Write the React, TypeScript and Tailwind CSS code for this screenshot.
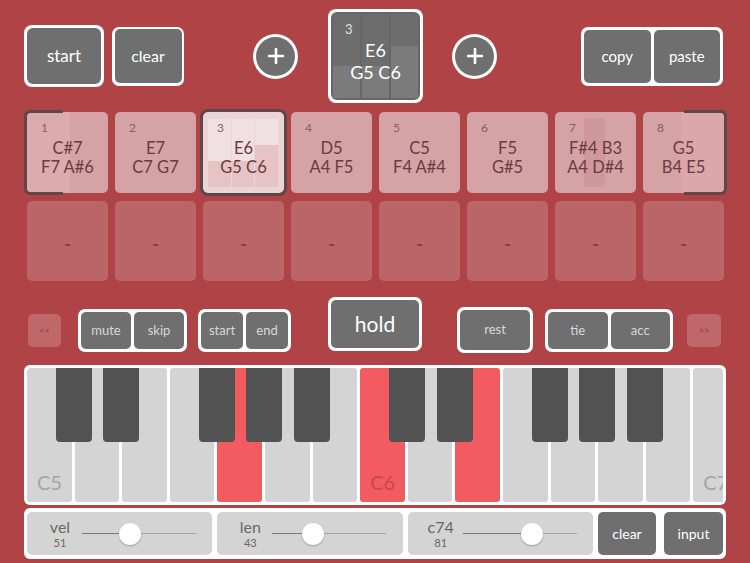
import React from 'react';

type Step = { n: number; top: string; bottom: string };

const steps: Step[] = [
  { n: 1, top: 'C#7', bottom: 'F7 A#6' },
  { n: 2, top: 'E7', bottom: 'C7 G7' },
  { n: 3, top: 'E6', bottom: 'G5 C6' },
  { n: 4, top: 'D5', bottom: 'A4 F5' },
  { n: 5, top: 'C5', bottom: 'F4 A#4' },
  { n: 6, top: 'F5', bottom: 'G#5' },
  { n: 7, top: 'F#4 B3', bottom: 'A4 D#4' },
  { n: 8, top: 'G5', bottom: 'B4 E5' },
];

const whiteKeys = ['C5', 'D5', 'E5', 'F5', 'G5', 'A5', 'B5', 'C6', 'D6', 'E6', 'F6', 'G6', 'A6', 'B6', 'C7'];
const litKeys = ['G5', 'C6', 'E6'];
const blackKeyLefts = [29, 76, 172, 219, 267, 362, 410, 505, 552, 600];

// bar heights (percent of column) for the three-note mini view
const bars = [38, 38, 62];

const font = { fontFamily: 'Lato, "Liberation Sans", sans-serif' };

const PlusCircle = () => (
  <div className="w-[45px] h-[45px] rounded-full bg-white p-[3px]">
    <div className="w-full h-full rounded-full bg-[#6f6f6f] flex items-center justify-center">
      <svg width="16" height="16" viewBox="0 0 16 16">
        <path d="M8 1v14M1 8h14" stroke="white" strokeWidth="2.6" strokeLinecap="round" />
      </svg>
    </div>
  </div>
);

const Pair = ({ labels, className, text }: { labels: string[]; className: string; text: string }) => (
  <div className={`bg-white rounded-[7px] p-[3px] flex gap-[3px] ${className}`}>
    {labels.map((l) => (
      <div key={l} className={`flex-1 rounded-[5px] bg-[#6f6f6f] flex items-center justify-center ${text}`}>
        {l}
      </div>
    ))}
  </div>
);

const MiniBars = ({ top, bottom, gap }: { top: string; bottom: string; gap: string }) => (
  <div className={`absolute inset-0 flex ${gap}`}>
    {bars.map((h, i) => (
      <div key={i} className={`flex-1 flex flex-col ${top}`}>
        <div className="flex-1" />
        <div className={bottom} style={{ height: `${h}%` }} />
      </div>
    ))}
  </div>
);

const StepCell = ({ step }: { step: Step }) => {
  const selected = step.n === 3;
  return (
    <div
      className={`relative h-[81px] rounded-[5px] ${
        selected ? 'bg-[#ebd4d5] ring-[3px] ring-[#5f4749]' : 'bg-[#d5a2a5]'
      }`}
    >
      {selected && (
        <div className="absolute left-[5px] right-[6px] top-[7px] bottom-[6px]">
          <MiniBars top="bg-[#f0e0e1]" bottom="bg-[#e6c3c5]" gap="gap-[1px]" />
        </div>
      )}
      {step.n === 1 && <div className="absolute left-0 top-0 bottom-0 w-[43px] rounded-l-[5px] bg-[#dbabad]" />}
      {step.n === 7 && <div className="absolute left-[29px] top-[6px] bottom-[6px] w-[21px] bg-[#d0989b]" />}
      {step.n === 8 && <div className="absolute right-0 top-0 bottom-0 w-[43px] rounded-r-[5px] bg-[#dca7aa]" />}
      {step.n === 1 && (
        <div className="absolute -left-[3px] -top-[2px] -bottom-[2px] w-[39px] border-l-[3px] border-t-[3px] border-b-[3px] border-[#5f4749] rounded-l-[6px]" />
      )}
      {step.n === 8 && (
        <div className="absolute left-[41px] -right-[3px] -top-[2px] -bottom-[2px] border-r-[3px] border-t-[3px] border-b-[3px] border-[#5f4749] rounded-r-[6px]" />
      )}
      <div className="absolute left-[14px] top-[9px] text-[12px] leading-[14px] text-[#8c5d60]">{step.n}</div>
      <div className="relative h-full pt-[11px] flex flex-col items-center justify-center text-[16.5px] leading-[19px] text-[#6a3b3e]">
        <div>{step.top}</div>
        <div>{step.bottom}</div>
      </div>
    </div>
  );
};

const Slider = ({ label, value, pct }: { label: string; value: number; pct: number }) => (
  <div className="flex-1 h-full rounded-[5px] bg-[#d4d4d4] flex items-center">
    <div className="w-[60px] pl-[6px] flex flex-col items-center text-[#686868]">
      <div className="text-[16px] leading-[16px]">{label}</div>
      <div className="text-[11px] leading-[13px] mt-[1px]">{value}</div>
    </div>
    <div className="relative w-[114px] h-[1.5px] bg-[#a6a6a6] -ml-[5px]">
      <div className="h-full bg-[#7a7a7a]" style={{ width: `${pct}%` }} />
      <div
        className="absolute top-1/2 w-[22px] h-[22px] -translate-x-1/2 -translate-y-1/2 rounded-full bg-white shadow-[0_1px_2px_rgba(0,0,0,0.25)]"
        style={{ left: `${pct}%` }}
      />
    </div>
  </div>
);

export default function App() {
  return (
    <div className="w-[750px] h-[563px] overflow-hidden bg-[#b04345] select-none" style={font}>
      {/* top bar */}
      <div className="flex items-center h-[94px] mt-[9px] pl-[24px]">
        <div className="w-[80px] h-[62px] bg-white rounded-[8px] p-[3px]">
          <div className="w-full h-full rounded-[6px] bg-[#6f6f6f] flex items-center justify-center text-white text-[17px]">
            start
          </div>
        </div>
        <div className="ml-[8px] w-[72px] h-[59px] bg-white rounded-[7px] p-[2.5px]">
          <div className="w-full h-full rounded-[5px] bg-[#6f6f6f] flex items-center justify-center text-white text-[16px]">
            clear
          </div>
        </div>
        <div className="ml-[69px]">
          <PlusCircle />
        </div>
        <div className="ml-[30px] w-[95px] h-[94px] bg-white rounded-[8px] p-[3px]">
          <div className="relative w-full h-full rounded-[6px] bg-[#666666] overflow-hidden">
            <div className="absolute inset-[2px]">
              <MiniBars top="bg-[#6d6d6d]" bottom="bg-[#7b7b7b]" gap="gap-[2px]" />
            </div>
            <div className="absolute left-[14px] top-[8px] text-[13px] text-[#e0e0e0]">3</div>
            <div className="relative h-full pt-[10px] flex flex-col items-center justify-center text-white text-[18px] leading-[22px]">
              <div>E6</div>
              <div>G5 C6</div>
            </div>
          </div>
        </div>
        <div className="ml-[29px]">
          <PlusCircle />
        </div>
        <Pair labels={['copy', 'paste']} className="ml-[84px] w-[142px] h-[59px]" text="text-white text-[15px]" />
      </div>

      {/* step grid */}
      <div className="grid grid-cols-8 gap-x-[7px] gap-y-[8px] w-[697px] ml-[27px] mt-[9px]">
        {steps.map((s) => (
          <StepCell key={s.n} step={s} />
        ))}
        {steps.map((s) => (
          <div
            key={`e${s.n}`}
            className="h-[80px] rounded-[5px] bg-[#bc6568] flex items-center justify-center pt-[6px] text-[18px] font-bold text-[#923c40]"
          >
            -
          </div>
        ))}
      </div>

      {/* transport row */}
      <div className="flex items-start h-[56px] mt-[16px] pl-[28px] text-[13px] text-[#d8d8d8]">
        <div className="mt-[17px] w-[33px] h-[33px] rounded-[5px] bg-[#c0676a] flex items-center justify-center text-[9px] text-[#8a3a3e]">
          &lt;&lt;
        </div>
        <Pair labels={['mute', 'skip']} className="ml-[17px] mt-[12px] w-[109px] h-[43px]" text="" />
        <Pair labels={['start', 'end']} className="ml-[11px] mt-[12px] w-[93px] h-[43px]" text="" />
        <div className="ml-[37px] w-[94px] h-[54px] bg-white rounded-[7px] p-[3px]">
          <div className="w-full h-full rounded-[5px] bg-[#6f6f6f] flex items-center justify-center text-white text-[21px]">
            hold
          </div>
        </div>
        <div className="ml-[35px] mt-[10px] w-[76px] h-[46px] bg-white rounded-[7px] p-[3px]">
          <div className="w-full h-full rounded-[5px] bg-[#6f6f6f] flex items-center justify-center">rest</div>
        </div>
        <Pair labels={['tie', 'acc']} className="ml-[12px] mt-[12px] w-[128px] h-[43px]" text="" />
        <div className="ml-[14px] mt-[17px] w-[34px] h-[33px] rounded-[5px] bg-[#c0676a] flex items-center justify-center text-[9px] text-[#8a3a3e]">
          &gt;&gt;
        </div>
      </div>

      {/* keyboard */}
      <div className="ml-[24px] mt-[12px] w-[702px] h-[140px] bg-white rounded-[6px] p-[3px]">
        <div className="relative w-full h-full overflow-hidden rounded-t-[4px]">
          <div className="flex gap-[3px] h-full">
            {whiteKeys.map((k) => {
              const lit = litKeys.includes(k);
              return (
                <div
                  key={k}
                  className={`shrink-0 w-[44.6px] h-full rounded-[3px] flex items-end pl-[10px] pb-[9px] text-[20px] leading-[22px] whitespace-nowrap ${
                    lit ? 'bg-[#f25b5f] text-[#c9484c]' : 'bg-[#d4d4d4] text-[#a4a4a4]'
                  }`}
                >
                  {k.startsWith('C') ? k : ''}
                </div>
              );
            })}
          </div>
          {blackKeyLefts.map((l) => (
            <div
              key={l}
              className="absolute top-0 w-[36px] h-[74px] rounded-b-[4px] bg-[#525252]"
              style={{ left: l }}
            />
          ))}
        </div>
      </div>

      {/* bottom controls */}
      <div className="ml-[24px] mt-[3px] w-[702px] h-[51px] bg-white rounded-[6px] pl-[3px] pr-[3px] py-[4px] flex gap-[5px]">
        <Slider label="vel" value={51} pct={42} />
        <Slider label="len" value={43} pct={36} />
        <Slider label="c74" value={81} pct={61} />
        <div className="w-[58px] shrink-0 rounded-[5px] bg-[#6f6f6f] flex items-center justify-center text-white text-[14px]">
          clear
        </div>
        <div className="w-[59px] shrink-0 ml-[3px] rounded-[5px] bg-[#6f6f6f] flex items-center justify-center text-white text-[14px]">
          input
        </div>
      </div>
    </div>
  );
}
